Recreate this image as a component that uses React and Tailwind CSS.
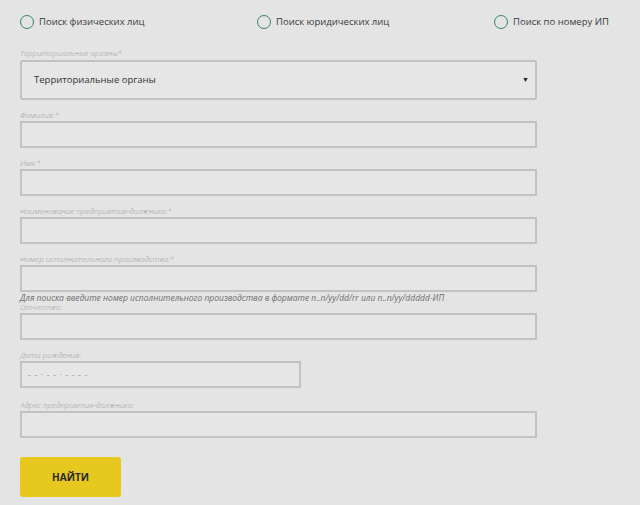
const fields = [
  { label: 'Фамилия:*' },
  { label: 'Имя:*' },
  { label: 'Наименование предприятия-должника:*' },
  {
    label: 'Номер исполнительного производства:*',
    hint: 'Для поиска введите номер исполнительного производства в формате n..n/yy/dd/rr или n..n/yy/ddddd-ИП',
  },
  { label: 'Отчество:', tight: true },
  { label: 'Дата рождения:', short: true, placeholder: '--·--·----' },
  { label: 'Адрес предприятия-должника:', extra: true },
];

const radios = ['Поиск физических лиц', 'Поиск юридических лиц', 'Поиск по номеру ИП'];

const Label = ({ children }) => (
  <p className="h-[10px] text-[8px] leading-[10px] font-light italic text-[#9c9c9c]">{children}</p>
);

export default function App() {
  return (
    <div
      className="min-h-[505px] w-[640px] bg-[#e4e4e4] pl-[20px] pt-[14px]"
      style={{ fontFamily: '"Open Sans", "Liberation Sans", sans-serif' }}
    >
      <div className="grid h-[16px] grid-cols-[237px_237px_auto] items-center">
        {radios.map((r) => (
          <label key={r} className="flex items-center gap-[5px] text-[9.5px] text-[#3a3a3a]">
            <span className="h-[14px] w-[14px] rounded-full border-[1.5px] border-[#3b7f63]" />
            {r}
          </label>
        ))}
      </div>

      <div className="mt-[18px] w-[517px]">
        <Label>Территориальные органы*</Label>
        <div className="mt-[2px] flex h-[40px] items-center justify-between rounded-[2px] border-2 border-[#c2c2c2] bg-[#e6e6e6] pl-[12px] pr-[6px]">
          <span className="text-[9.5px] text-[#333]">Территориальные органы</span>
          <span className="text-[7px] text-[#222]">▼</span>
        </div>

        {fields.map((f) => (
          <div key={f.label} className={f.tight ? 'mt-0' : f.extra ? 'mt-[12px]' : 'mt-[10px]'}>
            <Label>{f.label}</Label>
            <div
              className={`mt-[1px] flex h-[27px] items-center border-2 border-[#c2c2c2] bg-[#e6e6e6] pl-[6px] ${
                f.short ? 'w-[281px]' : 'w-full'
              }`}
            >
              {f.placeholder && (
                <span className="text-[9px] tracking-[3.5px] text-[#9a9a9a]">{f.placeholder}</span>
              )}
            </div>
            {f.hint && (
              <p className="mt-[1px] h-[9px] text-[8.5px] leading-[9px] italic text-[#6e6e6e]">{f.hint}</p>
            )}
          </div>
        ))}

        <button
          type="button"
          className="mt-[19px] flex h-[40px] w-[101px] items-center justify-center rounded-[3px] bg-[#e6c81f] text-[10px] font-bold text-[#2a2a2a]"
        >
          НАЙТИ
        </button>
      </div>
    </div>
  );
}
